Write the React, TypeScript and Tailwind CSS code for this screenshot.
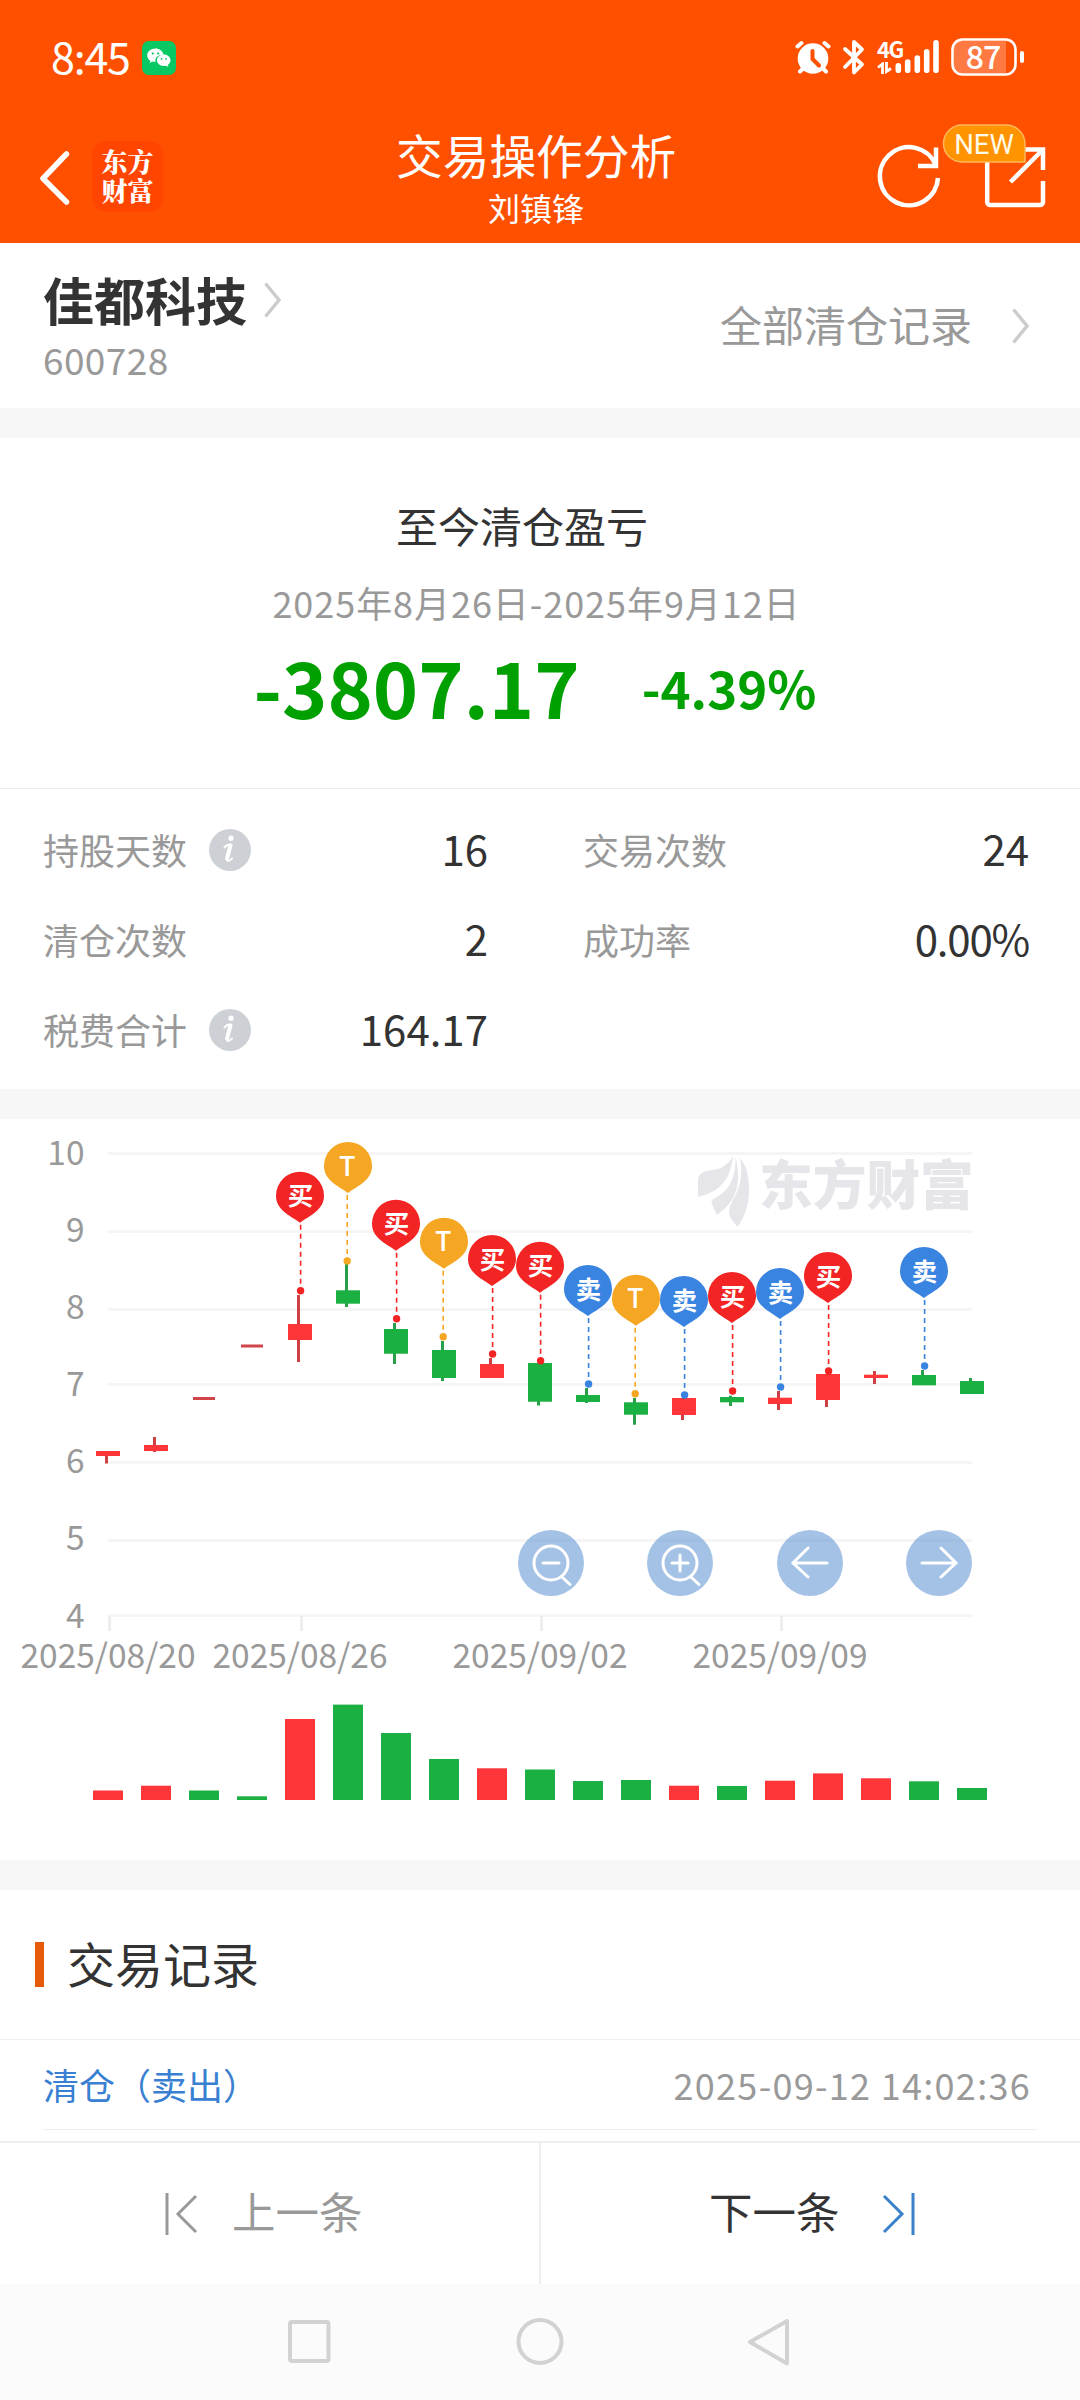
import React from 'react';

type Side = 'buy' | 'sell' | 't';

type Candle = {
    up: boolean;
    body: [number, number];
    wick: [number, number];
    vol: number;
    pin?: { side: Side; top: number };
};

const RED = '#ff3639';
const GREEN = '#1ab142';

const PINS: Record<Side, { label: string; color: string }> = {
    buy: { label: '买', color: '#f22424' },
    sell: { label: '卖', color: '#3983e1' },
    t: { label: 'T', color: '#f5a623' },
};

// values are in chart pixels, measured from the top of the chart card
const candles: Candle[] = [
    { up: true, body: [332, 337], wick: [332, 344.5], vol: 9.5 },
    { up: true, body: [326, 332], wick: [318, 333], vol: 14.3 },
    { up: true, body: [278, 281], wick: [278, 281], vol: 0 },
    { up: true, body: [225.5, 228.5], wick: [225.5, 228.5], vol: 0 },
    { up: true, body: [205, 221], wick: [176, 243], vol: 81, pin: { side: 'buy', top: 52.7 } },
    { up: false, body: [171.3, 184.7], wick: [145, 188], vol: 95.4, pin: { side: 't', top: 23 } },
    { up: false, body: [210, 234.7], wick: [204, 245], vol: 67, pin: { side: 'buy', top: 80.7 } },
    { up: false, body: [231, 259], wick: [222, 262], vol: 41, pin: { side: 't', top: 98.7 } },
    { up: true, body: [245, 259], wick: [239, 259], vol: 31.7, pin: { side: 'buy', top: 116 } },
    { up: false, body: [244, 282.7], wick: [244, 286.5], vol: 30.5, pin: { side: 'buy', top: 122.7 } },
    { up: false, body: [276, 283], wick: [269, 284], vol: 19, pin: { side: 'sell', top: 146 } },
    { up: false, body: [283.3, 295.7], wick: [279, 305.7], vol: 20, pin: { side: 't', top: 155.7 } },
    { up: true, body: [279, 296], wick: [279, 301], vol: 14.3, pin: { side: 'sell', top: 157 } },
    { up: false, body: [278, 283.3], wick: [276.7, 287], vol: 14, pin: { side: 'buy', top: 153 } },
    { up: true, body: [278.7, 285], wick: [272, 291], vol: 19.3, pin: { side: 'sell', top: 149 } },
    { up: true, body: [255, 281], wick: [255, 288], vol: 26.6, pin: { side: 'buy', top: 133 } },
    { up: true, body: [255.7, 259], wick: [252, 265], vol: 21.7 },
    { up: false, body: [256, 266.3], wick: [251, 266], vol: 18.7, pin: { side: 'sell', top: 128 } },
    { up: false, body: [262, 275], wick: [259, 275], vol: 12 },
];

// limit-up days have a flat candle but a green volume bar
const flatDays: Record<number, number> = { 2: 9.5, 3: 3.7 };

const gridLines = [33, 111, 189, 264, 342, 420, 495];
const yLabels = [
    { text: '10', y: 46 },
    { text: '9', y: 123 },
    { text: '8', y: 200 },
    { text: '7', y: 277 },
    { text: '6', y: 354 },
    { text: '5', y: 431 },
    { text: '4', y: 509 },
];
const xLabels = [
    { text: '2025/08/20', x: 108 },
    { text: '2025/08/26', x: 300 },
    { text: '2025/09/02', x: 540 },
    { text: '2025/09/09', x: 780 },
];

const StatusBar = () => (
    <div className="flex h-[112px] items-start justify-between pl-[51px] pr-[55px] pt-[38px]">
        <div className="flex items-center gap-[12px]">
            <span className="h-10 text-[43px] leading-[34px] tracking-[-1.2px]">8:45</span>
            <svg width="34" height="34" viewBox="0 0 34 34" className="mt-[-1px]">
                <rect width="34" height="34" rx="7" fill="#07c863" />
                <path d="M13.5 7.5c-4.600 0-8.300 3-8.300 6.900 0 2.200 1.200 4.100 3.100 5.300l-.7 2.300 2.800-1.400c1 .3 2 .4 3.100.4-.9-4.500 2.900-7.600 8-7.300-.6-3.600-4-6.200-8-6.200z" fill="#fff" />
                <path d="M28.500 19.300c0-3.200-3-5.700-6.700-5.700s-6.800 2.500-6.800 5.700 3 5.700 6.800 5.700c.9 0 1.700-.1 2.400-.3l2.200 1.200-.6-2c1.700-1.100 2.700-2.700 2.700-4.600z" fill="#fff" />
                <g fill="#07b85b">
                    <circle cx="10.800" cy="12.500" r="1.100" />
                    <circle cx="16.200" cy="12.500" r="1.100" />
                    <circle cx="19.500" cy="17.800" r=".9" />
                    <circle cx="24" cy="17.800" r=".9" />
                </g>
            </svg>
        </div>
        <div className="flex items-start">
            <svg width="36" height="38" viewBox="0 0 36 38" fill="none" stroke="#fff" strokeWidth="4" strokeLinecap="round">
                <circle cx="18" cy="20.500" r="15.300" fill="#fff" stroke="none" />
                <path d="M2.500 8.500L6.500 5M33.500 8.500L29.500 5M8 30.500l-3 3M28 30.500l3 3" />
                <path d="M17.500 13v8l6.500 6.500" stroke="#ff5000" strokeLinejoin="round" />
            </svg>
            <svg width="24" height="38" viewBox="0 0 24 38" fill="none" stroke="#fff" strokeWidth="3.800" strokeLinecap="round" strokeLinejoin="round" className="ml-[11px]">
                <path d="M3 11l17 15.500-8 8V4l8 7.500L3 29" />
            </svg>
            <div className="ml-[11px] w-[25px]">
                <div className="h-[24px] text-[22px] font-bold leading-[20px] tracking-[-1.5px]">4G</div>
                <svg width="15" height="12" viewBox="0 0 15 12" fill="none" stroke="#fff" strokeWidth="2.800">
                    <path d="M1 5.500L5.500 2v10M9.500 0v9.500L14 6.500" />
                </svg>
            </div>
            <svg width="42" height="38" viewBox="0 0 42 38" stroke="#fff" strokeWidth="5.600" strokeLinecap="round" className="ml-[-6px] overflow-visible">
                <path d="M2.300 27.700v4.600M11.700 24v8.300M21.300 20v12.300M30.700 13.700v18.600M40 4.700v27.600" />
            </svg>
            <svg width="74" height="38" viewBox="0 0 74 38" className="ml-[13px] overflow-visible">
                <path d="M9 3h46v32H9a6 6 0 0 1-6-6V9a6 6 0 0 1 6-6z" fill="#ff7a42" />
                <rect x="1.500" y="1.500" width="63" height="35" rx="10" fill="none" stroke="#fff" strokeWidth="2.600" />
                <rect x="69" y="13" width="4" height="12" rx="2" fill="#fff" />
                <text x="32" y="30.500" fill="#fff" fontSize="32" fontWeight="500" textAnchor="middle" letterSpacing="-1">
                    87
                </text>
            </svg>
        </div>
    </div>
);

const TitleBar = () => (
    <div className="relative flex h-[130px] items-start justify-between pl-[39px] pr-[34px]">
        <div className="flex items-center pt-[29px]">
            <svg width="32" height="56" viewBox="0 0 32 56" fill="none" stroke="#fff" strokeWidth="5.500" strokeLinecap="round" strokeLinejoin="round">
                <path d="M27.500 5L4 29.500 27.500 53" />
            </svg>
            <div className="ml-[21px] h-[71px] w-[71px] rounded-[14px] bg-[#ff4500] pt-[5px] text-center font-['Noto_Serif_CJK_SC','Noto_Sans_CJK_SC',sans-serif] text-[26px] font-black leading-[29px]">
                东方
                <br />
                财富
            </div>
        </div>
        <div className="absolute left-[396px] top-[10px] text-center">
            <div className="h-[60px] text-[46.7px] leading-[64px]">交易操作分析</div>
            <div className="h-[50px] text-[32px] leading-[50px]">刘镇锋</div>
        </div>
        <svg width="172" height="96" viewBox="0 0 172 96" fill="none" stroke="#fff" strokeWidth="4.500" className="mt-[10px] overflow-visible">
            <path d="M62 43.500A29.100 29.100 0 1 0 64 56" />
            <path d="M62 25.500v18.500H44" />
            <path d="M113.200 30v50a3 3 0 0 0 3 3H166a3 3 0 0 0 3-3V59M145 27.500h24V48M169 27.500L136.500 60" />
            <path d="M88 3h44a19 19 0 0 1 19 19v18H88a18.500 18.500 0 0 1 0-37z" fill="#ff9300" stroke="#ffb85c" strokeWidth="1.500" />
            <text x="110" y="31.500" fill="#fffbe8" stroke="none" textAnchor="middle" className="font-['Roboto',sans-serif] text-[27.5px]">
                NEW
            </text>
        </svg>
    </div>
);

const Chevron = () => (
    <svg width="18" height="36" viewBox="0 0 18 36" fill="none" stroke="#ccc" strokeWidth="3.400">
        <path d="M1.500 1.500L15 18 1.500 34.500" />
    </svg>
);

const InfoIcon = () => (
    <span className="ml-[22px] flex h-[42px] w-[42px] items-center justify-center rounded-full bg-[#cdd1d6] pr-0.5">
        <svg width="14" height="30" viewBox="0 0 14 30" fill="none" stroke="#fff" strokeLinecap="round" strokeLinejoin="round">
            <circle cx="9" cy="3.200" r="2.600" fill="#fff" stroke="none" />
            <path d="M8.500 10.500L5 23.500" strokeWidth="4" />
            <path d="M2.500 12.500c1.500-2 3.500-3 5.500-3M5 24.500c-.3 2.500 3 1.500 5-1" strokeWidth="2" />
        </svg>
    </span>
);

const Stat = ({ label, value, info }: { label: string; value: string; info?: boolean }) => (
    <div className="flex h-[90px] items-center justify-between text-[36px]">
        <div className="flex items-center text-[#999]">
            <span className="relative -top-px leading-[42px]">{label}</span>
            {info && <InfoIcon />}
        </div>
        <span className={`relative -top-0.5 text-[42px] leading-[42px] text-[#333] ${value.endsWith('%') ? 'tracking-[-1.2px]' : ''}`}>
            {value}
        </span>
    </div>
);

const Pin = ({ x, top, side }: { x: number; top: number; side: Side }) => {
    const { label, color } = PINS[side];
    const stem = side === 't' ? -0.8 : 0.6;
    return (
        <g transform={`translate(${x} ${top})`}>
            <path d="M0 0a24 24 0 0 1 24 24c0 14-13 19-24 27C-11 43-24 38-24 24A24 24 0 0 1 0 0z" fill={color} />
            <path d={`M${stem} 53v62`} stroke={color} strokeWidth="1.600" strokeDasharray="5 4" />
            <circle cx={stem} cy="119" r="3.700" fill={color} />
            <text x={stem} y="33.500" fill="#fff" fontSize={side === 't' ? 27 : 25.5} fontWeight={side === 't' ? 500 : 700} textAnchor="middle">
                {label}
            </text>
        </g>
    );
};

const ToolButton = ({ x, children }: { x: number; children: React.ReactNode }) => (
    <g transform={`translate(${x} 444)`}>
        <circle r="33" fill="#4a86cb" fillOpacity=".5" />
        <g fill="none" stroke="#fff" strokeWidth="3" strokeLinecap="round">
            {children}
        </g>
    </g>
);

const Chart = () => (
    <svg width="1080" height="741" viewBox="0 0 1080 741" className="block">
        {gridLines.map((y) => (
            <rect key={y} x="108" y={y} width="864" height="3" fill="#f5f5f5" />
        ))}
        {xLabels.map(({ text, x }) => (
            <g key={text}>
                <rect x={x} y="497" width="3" height="15" fill="#eee" />
                <text x={x} y="549" fill="#999" fontSize="33.500" textAnchor="middle">
                    {text}
                </text>
            </g>
        ))}
        {yLabels.map(({ text, y }) => (
            <text key={text} x="84.500" y={y} fill="#999" fontSize="33.500" textAnchor="end">
                {text}
            </text>
        ))}
        <g fill="#e6e6ea">
            <path d="M733 37C728 46 722 50 712 51c-9 1-14 4-14 11v16c14-4 32-10 35-41z" />
            <path d="M735.500 38c0 25-8 35-24 43 0 5 3 10 5.500 15 13-10 27-23 18.500-58z" />
            <path d="M740 39c6 32-11 42-11 54 0 6 5 10 8.500 15 7-10 11.500-22 11.500-36 0-14-2-25-9-33z" />
            <text x="759" y="85.500" fontSize="53.700" fontWeight="900">
                东方财富
            </text>
        </g>
        {candles.map((c, i) => {
            const x = 108 + i * 48;
            const color = c.up ? RED : GREEN;
            const flat = i in flatDays;
            const vol = flat ? flatDays[i] : c.vol;
            return (
                <g key={i}>
                    {!flat && (
                        <rect x={x - 3} y={c.wick[0]} width="3" height={c.wick[1] - c.wick[0]} fill={c.up ? '#cf4044' : '#2a9f49'} />
                    )}
                    <rect
                        x={flat ? x - 11 : x - 12}
                        y={c.body[0]}
                        width={flat ? 22 : 24}
                        height={c.body[1] - c.body[0]}
                        fill={flat ? '#d24448' : color}
                    />
                    <rect x={x - 15} y={681 - vol} width="30" height={vol} fill={flat ? GREEN : color} />
                </g>
            );
        })}
        {candles.map((c, i) => c.pin && <Pin key={i} x={108 + i * 48} top={c.pin.top} side={c.pin.side} />)}
        <ToolButton x={551}>
            <circle r="17" />
            <path d="M-8 0H8M11 14l8 7.500" />
        </ToolButton>
        <ToolButton x={680}>
            <circle r="17" />
            <path d="M-8 0H8M0-8V8M11 14l8 7.500" />
        </ToolButton>
        <ToolButton x={810}>
            <path d="M17 0H-17M-2-15L-17 0-2 14" />
        </ToolButton>
        <ToolButton x={939}>
            <path d="M-17 0H17M2-15L17 0 2 14" />
        </ToolButton>
    </svg>
);

const BottomBar = () => (
    <div className="flex h-[143px] border-t-2 border-[#eee] bg-white text-[43.5px]">
        <button className="flex w-[539px] items-center pl-[165px] text-[#999]">
            <svg width="34" height="44" viewBox="0 0 34 44" fill="none" stroke="#999" strokeWidth="3">
                <path d="M2 1v42M31 4L13 22 31 40" />
            </svg>
            <span className="relative -top-[3px] ml-[33px]">上一条</span>
        </button>
        <button className="flex flex-1 items-center border-l-2 border-[#eee] pl-[168px] text-[#333]">
            <span className="relative -top-[3px]">下一条</span>
            <svg width="34" height="44" viewBox="0 0 34 44" fill="none" stroke="#3a80cb" strokeWidth="3" className="ml-[41px]">
                <path d="M32 1v42M3 4l18 18L3 40" />
            </svg>
        </button>
    </div>
);

const SystemNav = () => (
    <div className="flex h-[116px] items-start bg-[#fbfbfb] pl-[286px] pt-[34px]">
        <svg width="504" height="48" viewBox="0 0 504 48" fill="none" stroke="#d2d2d2" strokeWidth="4" strokeLinejoin="round">
            <rect x="4" y="4" width="38.500" height="39" rx="2" />
            <circle cx="254" cy="23.500" r="21.500" />
            <path d="M501 3v42.500L464 24z" />
        </svg>
    </div>
);

export default function App() {
    return (
        <div className="flex h-[2400px] w-[1080px] flex-col overflow-hidden bg-white font-['Noto_Sans_CJK_SC',sans-serif] text-[#333]">
            <header className="h-[243px] shrink-0 bg-[#ff5000] text-white">
                <StatusBar />
                <TitleBar />
            </header>

            <section className="flex h-[165px] shrink-0 justify-between pl-[43px] pr-[50px]">
                <div>
                    <div className="mt-[25px] flex h-[64px] items-center gap-[17px]">
                        <h1 className="-mt-0.5 text-[51px] font-bold leading-[64px]">佳都科技</h1>
                        <Chevron />
                    </div>
                    <div className="text-[37px] leading-[54px] tracking-[0.4px] text-[#999]">600728</div>
                </div>
                <div className="flex h-[165px] items-center gap-[40px] text-[42px] text-[#999]">
                    <span className="relative -top-0.5">全部清仓记录</span>
                    <Chevron />
                </div>
            </section>
            <div className="h-[30px] shrink-0 bg-[#f7f7f7]" />

            <section className="flex h-[350px] shrink-0 flex-col items-center pt-[56px]">
                <h2 className="mr-[36px] text-[42px] leading-[62px]">至今清仓盈亏</h2>
                <p className="mr-[7px] mt-[18px] text-[36px] leading-[56px] tracking-[0.95px] text-[#999]">2025年8月26日-2025年9月12日</p>
                <div className="mr-[10px] mt-0.5 flex h-[108px] items-center gap-[62px] font-bold text-[#00a000]">
                    <span className="text-[77px] leading-[108px]">-3807.17</span>
                    <span className="pt-px text-[51px] leading-[108px]">-4.39%</span>
                </div>
            </section>

            <section className="grid h-[301px] shrink-0 grid-cols-[445px_446px] content-start gap-x-[95px] border-t border-[#ececec] pl-[43px] pt-[16px]">
                <Stat label="持股天数" value="16" info />
                <Stat label="交易次数" value="24" />
                <Stat label="清仓次数" value="2" />
                <Stat label="成功率" value="0.00%" />
                <Stat label="税费合计" value="164.17" info />
            </section>
            <div className="h-[30px] shrink-0 bg-[#f7f7f7]" />

            <section className="shrink-0">
                <Chart />
            </section>
            <div className="h-[30px] shrink-0 bg-[#f7f7f7]" />

            <section className="h-[251px] shrink-0">
                <div className="flex h-[150px] items-center border-b border-[#eee] pl-[35px]">
                    <span className="h-[45px] w-[9px] bg-[#e65a0a]" />
                    <h2 className="relative -top-[3px] ml-[23px] text-[48px]">交易记录</h2>
                </div>
                <div className="mx-[43px] flex h-[90px] items-center justify-between border-b border-[#eee] pb-[2px] pr-[6px] text-[36px]">
                    <span className="text-[#3a80d2]">清仓（卖出）</span>
                    <span className="tracking-[1.3px] text-[#999]">2025-09-12 14:02:36</span>
                </div>
            </section>

            <BottomBar />
            <SystemNav />
        </div>
    );
}
